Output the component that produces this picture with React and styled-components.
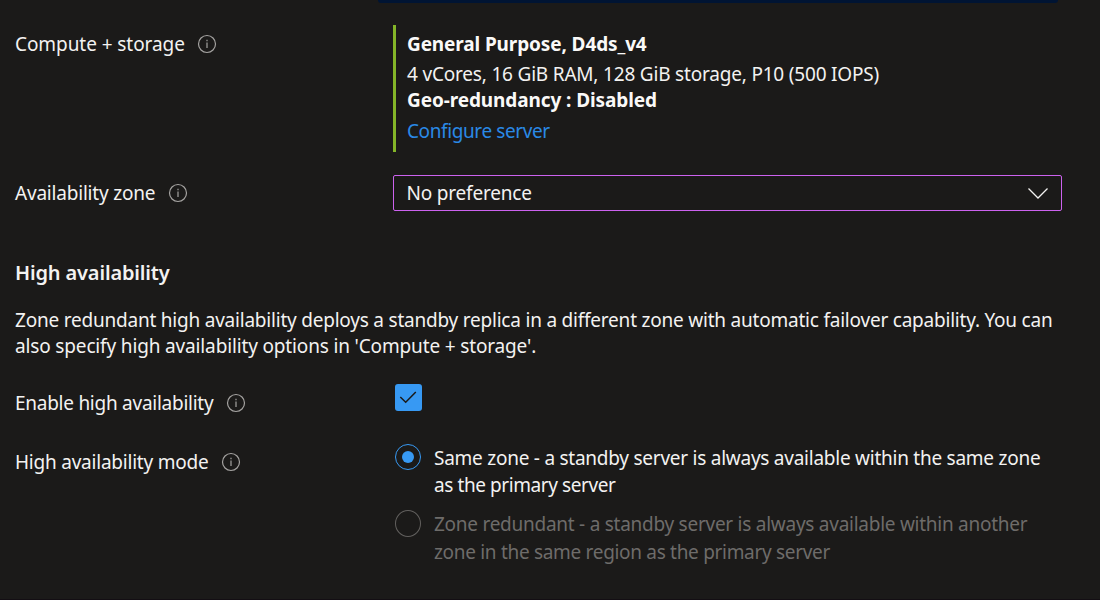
import React from 'react';
import styled, { createGlobalStyle } from 'styled-components';

const GlobalStyle = createGlobalStyle`
  * { box-sizing: border-box; }
  body {
    margin: 0;
    background: #1b1a19;
    color: #f3f2f1;
    font-family: "Noto Sans", sans-serif;
    font-size: 19px;
    line-height: 26px;
    overflow: hidden;
  }
`;

const Page = styled.main`
  height: 600px;
  padding-left: 15px;
  display: flex;
  flex-direction: column;
  border-bottom: 1px solid #130e13;
`;

const Banner = styled.div`
  flex: none;
  width: 680px;
  height: 3px;
  margin-left: 363px;
  background: #001433;
  border-radius: 0 0 3px 3px;
`;

const FormRow = styled.div`
  flex: none;
  display: grid;
  grid-template-columns: 378px 669px;
  align-items: start;
  margin-top: ${(p) => p.$gap}px;
`;

const Line = styled.div`
  height: ${(p) => p.$height || 26}px;
  white-space: nowrap;
  letter-spacing: ${(p) => p.$track || 0}px;
`;

const Label = styled.label`
  display: flex;
  align-items: center;
  gap: 12.5px;
  padding-top: ${(p) => p.$drop}px;
`;

const InfoSvg = styled.svg`
  display: block;
  width: 20px;
  height: 20px;
  fill: none;
  stroke: #a5a3a1;
  stroke-width: 1.2;
`;

const Summary = styled.div`
  height: 127px;
  padding: 6px 0 0 11px;
  border-left: 3px solid #84b528;
`;

const Strong = styled(Line)`
  font-weight: 700;
  color: #faf9f8;
`;

const Detail = styled(Line)`
  margin-top: 4px;
`;

const ConfigureLink = styled.a`
  display: block;
  margin-top: 5px;
  color: #2a89e6;
  letter-spacing: -0.4px;
`;

const Select = styled.div`
  display: flex;
  align-items: center;
  justify-content: space-between;
  height: 36px;
  padding: 0 13px 0 12.5px;
  border: 1px solid #cc62ee;
  border-radius: 2px;
`;

const ChevronSvg = styled.svg`
  width: 21px;
  height: 12px;
  fill: none;
  stroke: #f3f2f1;
  stroke-width: 1.3;
`;

const Heading = styled.h2`
  flex: none;
  margin: 48px 0 0;
  font-size: 20px;
  line-height: 27px;
  font-weight: 600;
  letter-spacing: -0.15px;
`;

const Paragraph = styled.div`
  flex: none;
  margin-top: 21px;
`;

const Checkbox = styled.div`
  width: 27px;
  height: 27px;
  margin-left: 2px;
  border-radius: 3px;
  background: #3799f3;
`;

const CheckSvg = styled.svg`
  display: block;
  width: 27px;
  height: 27px;
  fill: none;
  stroke: #1b1a19;
  stroke-width: 1.5;
`;

const RadioGroup = styled.div`
  padding-left: 2px;
`;

const RadioOption = styled.div`
  display: grid;
  grid-template-columns: 26px 1fr;
  column-gap: 13px;
  height: 66px;
  color: ${(p) => (p.$disabled ? '#6e6c6a' : '#f3f2f1')};
`;

const RadioCircle = styled.span`
  display: flex;
  align-items: center;
  justify-content: center;
  width: 26px;
  height: ${(p) => (p.$disabled ? 27 : 26)}px;
  border: 1px solid ${(p) => (p.$disabled ? '#62605e' : '#3799f3')};
  border-radius: 50%;
`;

const RadioDot = styled.span`
  width: 12px;
  height: 12px;
  border-radius: 50%;
  background: #3799f3;
`;

const RadioText = styled.div`
  padding-top: 1px;
`;

function InfoIcon() {
  return (
    <InfoSvg viewBox="0 0 20 20">
      <circle cx="10" cy="10" r="8.5" />
      <path d="M10 8.5V14M10 5.8V7.2" />
    </InfoSvg>
  );
}

function FieldLabel({ text, track, drop }) {
  return (
    <Label $drop={drop}>
      <Line $track={track}>{text}</Line>
      <InfoIcon />
    </Label>
  );
}

export default function App() {
  return (
    <>
      <GlobalStyle />
      <Page>
        <Banner />
        <FormRow $gap={22}>
          <FieldLabel text="Compute + storage" track={-0.07} drop={6} />
          <Summary>
            <Strong $track={-0.12}>General Purpose, D4ds_v4</Strong>
            <Detail $track={-0.19}>4 vCores, 16 GiB RAM, 128 GiB storage, P10 (500 IOPS)</Detail>
            <Strong $track={-0.1}>Geo-redundancy : Disabled</Strong>
            <ConfigureLink>Configure server</ConfigureLink>
          </Summary>
        </FormRow>
        <FormRow $gap={23}>
          <FieldLabel text="Availability zone" track={-0.2} drop={5} />
          <Select>
            <Line $track={-0.2}>No preference</Line>
            <ChevronSvg viewBox="0 0 21 12">
              <path d="M1.5 1.5L11 11L20.5 1.5" />
            </ChevronSvg>
          </Select>
        </FormRow>
        <Heading>High availability</Heading>
        <Paragraph>
          <Line $track={-0.215}>
            Zone redundant high availability deploys a standby replica in a different zone with automatic failover capability. You can
          </Line>
          <Line $track={-0.15}>also specify high availability options in 'Compute + storage'.</Line>
        </Paragraph>
        <FormRow $gap={25}>
          <FieldLabel text="Enable high availability" track={-0.26} drop={6} />
          <Checkbox>
            <CheckSvg viewBox="0 0 27 27">
              <path d="M5.3 13L10.7 18.3L20.8 8" />
            </CheckSvg>
          </Checkbox>
        </FormRow>
        <FormRow $gap={28}>
          <FieldLabel text="High availability mode" track={-0.22} drop={5} />
          <RadioGroup>
            <RadioOption>
              <RadioCircle>
                <RadioDot />
              </RadioCircle>
              <RadioText>
                <Line $height={27} $track={-0.25}>Same zone - a standby server is always available within the same zone</Line>
                <Line $track={-0.42}>as the primary server</Line>
              </RadioText>
            </RadioOption>
            <RadioOption $disabled>
              <RadioCircle $disabled />
              <RadioText>
                <Line $height={28} $track={-0.26}>Zone redundant - a standby server is always available within another</Line>
                <Line $track={-0.31}>zone in the same region as the primary server</Line>
              </RadioText>
            </RadioOption>
          </RadioGroup>
        </FormRow>
      </Page>
    </>
  );
}
